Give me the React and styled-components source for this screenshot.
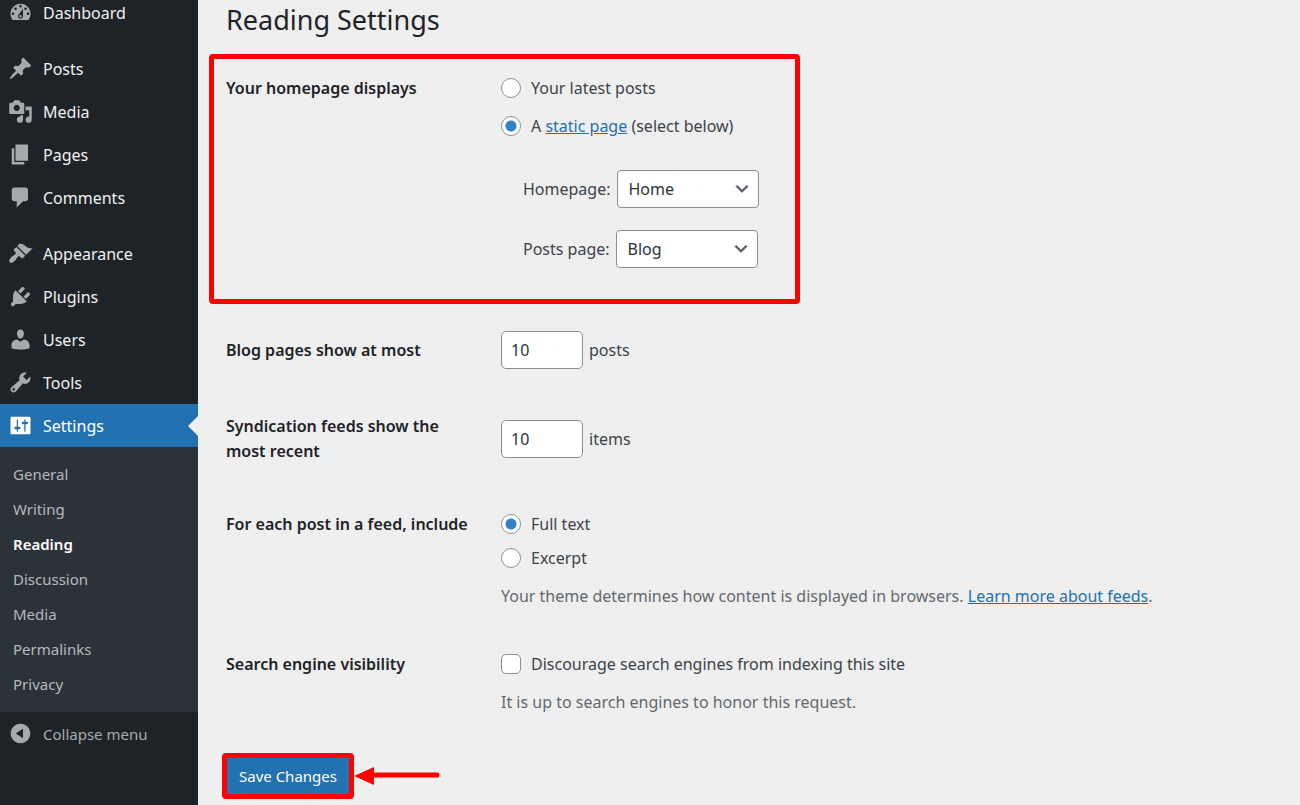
import React from 'react';
import styled, { createGlobalStyle, css } from 'styled-components';

const GlobalStyle = createGlobalStyle`
    * {
        box-sizing: border-box;
    }
    body {
        margin: 0;
        background: #efefef;
        color: #3c434a;
        font-family: "Noto Sans", "Open Sans", sans-serif;
        font-size: 16px;
        line-height: 24px;
    }
`;

const Page = styled.div`
    display: flex;
    height: 100vh;
    overflow: hidden;
`;

const Sidebar = styled.nav`
    flex: 0 0 198px;
    background: #1d2327;
`;

const MenuGroup = styled.ul`
    list-style: none;
    margin: ${({ $first }) => ($first ? '-9px 0 0' : '13px 0 0')};
    padding: 0;
`;

const rowStyle = css`
    display: flex;
    align-items: center;
    gap: 10px;
    width: 100%;
    height: 43px;
    padding: 0 8px;
    text-decoration: none;
`;

const MenuLink = styled.a`
    ${rowStyle}
    position: relative;
    color: ${({ $active }) => ($active ? '#fff' : '#f0f0f1')};
    background: ${({ $active }) => ($active ? '#2271b1' : 'transparent')};
    & > svg {
        fill: ${({ $active }) => ($active ? '#fff' : '#a7aaad')};
    }
    ${({ $active }) => $active && css`
        &::after {
            content: "";
            position: absolute;
            right: 0;
            top: 50%;
            transform: translateY(-50%);
            border: 10px solid transparent;
            border-right-color: #efefef;
            border-left: 0;
        }
    `}
`;

const CollapseButton = styled.button`
    ${rowStyle}
    border: 0;
    background: none;
    color: #a7aaad;
    font-family: inherit;
    font-size: 15px;
    & > svg {
        fill: #a7aaad;
    }
`;

const Icon = styled.svg`
    flex: none;
    width: 25px;
    height: 25px;
`;

const SubMenu = styled.ul`
    list-style: none;
    margin: 0;
    padding: 10px 13px;
    background: #2c3338;
`;

const SubLink = styled.a`
    display: block;
    line-height: 35px;
    font-size: 15px;
    font-weight: ${({ $current }) => ($current ? 600 : 400)};
    color: ${({ $current }) => ($current ? '#fff' : '#b4b9be')};
    text-decoration: none;
`;

const Content = styled.main`
    flex: 1;
    min-width: 0;
    padding: 0 28px;
`;

const Title = styled.h1`
    margin: 0;
    padding: 2px 0 16px;
    font-size: 27px;
    font-weight: 400;
    line-height: 36px;
    color: #1d2327;
`;

const Row = styled.div`
    display: grid;
    grid-template-columns: 275px 1fr;
    margin-bottom: ${({ $gap }) => $gap || 0}px;
`;

const Highlight = styled.div`
    width: fit-content;
    margin: 0 0 27px -17px;
    padding: 17px 36px 31px 12px;
    border: 5px solid #ff0000;
    border-radius: 4px;
`;

const RowLabel = styled.div`
    padding-right: 26px;
    padding-top: ${({ $drop }) => $drop || 0}px;
    font-weight: 600;
    line-height: 25px;
    color: #1d2327;
`;

const Options = styled.div`
    display: flex;
    flex-direction: column;
    gap: ${({ $gap }) => $gap}px;
`;

const Option = styled.label`
    display: flex;
    align-items: center;
    gap: 10px;
`;

const Radio = styled.input.attrs({ type: 'radio' })`
    appearance: none;
    flex: none;
    width: 20px;
    height: 20px;
    margin: 0;
    border: 1px solid #8c8f94;
    border-radius: 50%;
    background: #fff;
    &:checked {
        background: radial-gradient(circle, #3582c4 5px, #fff 6px);
    }
`;

const Checkbox = styled.input.attrs({ type: 'checkbox' })`
    appearance: none;
    flex: none;
    width: 20px;
    height: 20px;
    margin: 0;
    border: 1px solid #8c8f94;
    border-radius: 5px;
    background: #fff;
`;

const Link = styled.a`
    color: #2271b1;
`;

const PageChoices = styled.div`
    display: flex;
    flex-direction: column;
    gap: 22px;
    padding: 32px 0 0 22px;
`;

const Choice = styled.div`
    display: flex;
    align-items: center;
    gap: 6px;
`;

const SelectWrap = styled.div`
    position: relative;
    & > svg {
        position: absolute;
        right: 8px;
        top: 50%;
        transform: translateY(-50%);
        pointer-events: none;
    }
`;

const Select = styled.select`
    appearance: none;
    display: block;
    width: 142px;
    height: 38px;
    padding: 0 30px 0 11px;
    border: 1px solid #8c8f94;
    border-radius: 4px;
    background: #fff;
    color: #2c3338;
    font-family: inherit;
    font-size: 16px;
`;

const NumberField = styled.div`
    display: flex;
    align-items: center;
    gap: 6px;
`;

const NumberInput = styled.input`
    width: 82px;
    height: 38px;
    padding: 0 9px;
    border: 1px solid #8c8f94;
    border-radius: 5px;
    background: #fff;
    color: #2c3338;
    font-family: inherit;
    font-size: 16px;
`;

const Description = styled.p`
    margin: 14px 0 0;
    color: #646970;
`;

const SubmitRow = styled.div`
    display: flex;
    align-items: center;
    margin-left: -4px;
`;

const SaveButton = styled.button`
    height: 46px;
    padding: 0 12px;
    border: 5px solid #ff0000;
    border-radius: 4px;
    background: #2271b1;
    color: #fff;
    font-family: inherit;
    font-size: 15px;
`;

const icons = {
    dashboard: 'M3.76 16h12.48c1.1-1.37 1.76-3.11 1.76-5 0-4.42-3.58-8-8-8s-8 3.58-8 8c0 1.89.66 3.63 1.76 5zM10 4c.55 0 1 .45 1 1s-.45 1-1 1-1-.45-1-1 .45-1 1-1zM6 6c.55 0 1 .45 1 1s-.45 1-1 1-1-.45-1-1 .45-1 1-1zm8 0c.55 0 1 .45 1 1s-.45 1-1 1-1-.45-1-1 .45-1 1-1zm-5.37 5.55L12 7v6c0 1.1-.9 2-2 2s-2-.9-2-2c0-.57.24-1.08.63-1.45zM4 10c.55 0 1 .45 1 1s-.45 1-1 1-1-.45-1-1 .45-1 1-1zm12 0c.55 0 1 .45 1 1s-.45 1-1 1-1-.45-1-1 .45-1 1-1zm-5 3c0-.55-.45-1-1-1s-1 .45-1 1 .45 1 1 1 1-.45 1-1z',
    post: 'M10.44 3.02l1.82-1.82 6.36 6.35-1.83 1.82c-1.05-.68-2.48-.57-3.41.36l-.75.75c-.92.93-1.04 2.35-.35 3.41l-1.83 1.82-2.41-2.41-2.8 2.79c-.42.42-3.38 2.71-3.8 2.29s1.86-3.39 2.28-3.81l2.79-2.79L4.1 9.36l1.83-1.82c1.05.69 2.48.57 3.4-.36l.75-.75c.93-.92 1.05-2.35.36-3.41z',
    media: 'M13 11V4c0-.55-.45-1-1-1h-1.67L9 1H5L3.67 3H2c-.55 0-1 .45-1 1v7c0 .55.45 1 1 1h10c.55 0 1-.45 1-1zM7 4.5c1.38 0 2.5 1.12 2.5 2.5S8.38 9.5 7 9.5 4.5 8.38 4.5 7 5.62 4.5 7 4.5zM14 6h5v10.5c0 1.38-1.12 2.5-2.5 2.5S14 17.88 14 16.5s1.12-2.5 2.5-2.5c.17 0 .34.02.5.05V9h-3V6zm-4 8.05V13h2v3.5c0 1.38-1.12 2.5-2.5 2.5S7 17.88 7 16.5 8.12 14 9.5 14c.17 0 .34.02.5.05z',
    page: 'M6 15V2h10v13H6zm-1 1h8v2H3V5h2v11z',
    comments: 'M5 2h9c1.1 0 2 .9 2 2v7c0 1.1-.9 2-2 2h-2l-5 5v-5H5c-1.1 0-2-.9-2-2V4c0-1.1.9-2 2-2z',
    appearance: 'M14.48 11.06L7.41 3.99l1.5-1.5c.5-.56 2.3-.47 3.51.32 1.21.8 1.43 1.28 2.91 2.1 1.18.64 2.45 1.26 4.45.85zm-.71.71L6.7 4.7 4.93 6.47c-.39.39-.39 1.02 0 1.41l1.06 1.06c.39.39.39 1.03 0 1.42-.6.6-1.43 1.11-2.21 1.69-.35.26-.7.53-1.01.84C1.43 14.23.4 16.08 1.4 17.07c.99 1 2.84-.03 4.18-1.36.31-.31.58-.66.85-1.02.57-.78 1.08-1.61 1.69-2.21.39-.39 1.02-.39 1.41 0l1.06 1.06c.39.39 1.02.39 1.41 0z',
    plugins: 'M13.11 4.36L9.87 7.6 8 5.73l3.24-3.24c.35-.34 1.05-.2 1.56.32.52.51.66 1.21.31 1.55zm-8 1.77l.91-1.12 9.01 9.01-1.19.84c-.71.71-2.63 1.16-3.82 1.16H6.14L4.9 17.26c-.59.59-1.54.59-2.12 0-.59-.58-.59-1.53 0-2.12l1.24-1.24v-3.88c0-1.13.4-3.19 1.09-3.89zm7.26 3.97l3.24-3.24c.34-.35 1.04-.21 1.55.31.52.51.66 1.21.31 1.55l-3.24 3.25z',
    users: 'M10 9.25c-2.27 0-2.73-3.44-2.73-3.44C7 4.02 7.82 2 9.97 2c2.16 0 2.98 2.02 2.71 3.81 0 0-.41 3.44-2.68 3.44zm0 2.57L12.72 10c2.39 0 4.52 2.33 4.52 4.53v2.49s-3.65 1.13-7.24 1.13c-3.65 0-7.24-1.13-7.24-1.13v-2.49c0-2.25 1.94-4.48 4.47-4.48z',
    tools: 'M16.68 9.77c-1.34 1.34-3.3 1.67-4.95.99l-5.41 6.52c-.99.99-2.59.99-3.58 0s-.99-2.59 0-3.57l6.52-5.42c-.68-1.65-.35-3.61.99-4.95 1.28-1.28 3.12-1.62 4.72-1.06l-2.89 2.89 2.82 2.82 2.86-2.87c.53 1.58.18 3.39-1.08 4.65zM3.81 16.21c.4.39 1.04.39 1.43 0 .4-.4.4-1.04 0-1.43-.39-.4-1.03-.4-1.43 0-.39.39-.39 1.03 0 1.43z',
    settings: 'M18 16V4c0-.55-.45-1-1-1H3c-.55 0-1 .45-1 1v12c0 .55.45 1 1 1h14c.55 0 1-.45 1-1zM8 11h1c.55 0 1 .45 1 1s-.45 1-1 1H8v1.5c0 .28-.22.5-.5.5s-.5-.22-.5-.5V13H6c-.55 0-1-.45-1-1s.45-1 1-1h1V5.5c0-.28.22-.5.5-.5s.5.22.5.5V11zm5-2h-1c-.55 0-1-.45-1-1s.45-1 1-1h1V5.5c0-.28.22-.5.5-.5s.5.22.5.5V7h1c.55 0 1 .45 1 1s-.45 1-1 1h-1v5.5c0 .28-.22.5-.5.5s-.5-.22-.5-.5V9z',
    collapse: 'M10 2.16c4.33 0 7.84 3.51 7.84 7.84s-3.51 7.84-7.84 7.84S2.16 14.33 2.16 10 5.71 2.16 10 2.16zm2 11.72V6.12L6.18 9.97z',
};

const menu = [
    [['Dashboard', 'dashboard']],
    [['Posts', 'post'], ['Media', 'media'], ['Pages', 'page'], ['Comments', 'comments']],
    [
        ['Appearance', 'appearance'],
        ['Plugins', 'plugins'],
        ['Users', 'users'],
        ['Tools', 'tools'],
        ['Settings', 'settings'],
    ],
];

const settingsPages = ['General', 'Writing', 'Reading', 'Discussion', 'Media', 'Permalinks', 'Privacy'];

const MenuIcon = ({ name }) => (
    <Icon viewBox="0 0 20 20" aria-hidden="true">
        <path d={icons[name]} />
    </Icon>
);

const PageSelect = ({ id, label, value }) => (
    <Choice>
        <label htmlFor={id}>{label}</label>
        <SelectWrap>
            <Select id={id} defaultValue={value}>
                <option>{value}</option>
            </Select>
            <svg width="18" height="18" viewBox="0 0 20 20" aria-hidden="true">
                <path d="M5 6l5 5 5-5 2 1-7 7-7-7 2-1z" fill="#50575e" stroke="#50575e" strokeWidth=".5" />
            </svg>
        </SelectWrap>
    </Choice>
);

const Arrow = () => (
    <svg width="86" height="20" viewBox="0 0 86 20" aria-hidden="true">
        <path d="M0 10L20 1v18z" fill="#ff0000" />
        <path d="M18 9h65" stroke="#ff0000" strokeWidth="5" strokeLinecap="round" />
    </svg>
);

function App() {
    return (
        <Page>
            <GlobalStyle />
            <Sidebar>
                {menu.map((group, i) => (
                    <MenuGroup key={i} $first={i === 0}>
                        {group.map(([label, icon]) => (
                            <li key={label}>
                                <MenuLink href="#" $active={label === 'Settings'}>
                                    <MenuIcon name={icon} />
                                    {label}
                                </MenuLink>
                            </li>
                        ))}
                    </MenuGroup>
                ))}
                <SubMenu>
                    {settingsPages.map((name) => (
                        <li key={name}>
                            <SubLink href="#" $current={name === 'Reading'}>{name}</SubLink>
                        </li>
                    ))}
                </SubMenu>
                <CollapseButton type="button">
                    <MenuIcon name="collapse" />
                    Collapse menu
                </CollapseButton>
            </Sidebar>

            <Content>
                <Title>Reading Settings</Title>

                <Highlight>
                    <Row role="radiogroup" aria-labelledby="front-label">
                        <RowLabel id="front-label">Your homepage displays</RowLabel>
                        <div>
                            <Options $gap={14}>
                                <Option>
                                    <Radio name="front" />
                                    Your latest posts
                                </Option>
                                <Option>
                                    <Radio name="front" defaultChecked />
                                    <span>A <Link href="#">static page</Link> (select below)</span>
                                </Option>
                            </Options>
                            <PageChoices>
                                <PageSelect id="home" label="Homepage:" value="Home" />
                                <PageSelect id="blog" label="Posts page:" value="Blog" />
                            </PageChoices>
                        </div>
                    </Row>
                </Highlight>

                <Row $gap={45}>
                    <RowLabel as="label" htmlFor="per-page" $drop={7}>Blog pages show at most</RowLabel>
                    <NumberField>
                        <NumberInput id="per-page" defaultValue="10" />
                        posts
                    </NumberField>
                </Row>

                <Row $gap={48}>
                    <RowLabel as="label" htmlFor="per-feed">Syndication feeds show the most recent</RowLabel>
                    <NumberField>
                        <NumberInput id="per-feed" defaultValue="10" />
                        items
                    </NumberField>
                </Row>

                <Row $gap={44} role="radiogroup" aria-labelledby="feed-label">
                    <RowLabel id="feed-label">For each post in a feed, include</RowLabel>
                    <div>
                        <Options $gap={10}>
                            <Option>
                                <Radio name="feed" defaultChecked />
                                Full text
                            </Option>
                            <Option>
                                <Radio name="feed" />
                                Excerpt
                            </Option>
                        </Options>
                        <Description>
                            Your theme determines how content is displayed in browsers.{' '}
                            <Link href="#">Learn more about feeds</Link>.
                        </Description>
                    </div>
                </Row>

                <Row $gap={39}>
                    <RowLabel>Search engine visibility</RowLabel>
                    <div>
                        <Option>
                            <Checkbox />
                            Discourage search engines from indexing this site
                        </Option>
                        <Description>It is up to search engines to honor this request.</Description>
                    </div>
                </Row>

                <SubmitRow>
                    <SaveButton type="button">Save Changes</SaveButton>
                    <Arrow />
                </SubmitRow>
            </Content>
        </Page>
    );
}

export default App;
